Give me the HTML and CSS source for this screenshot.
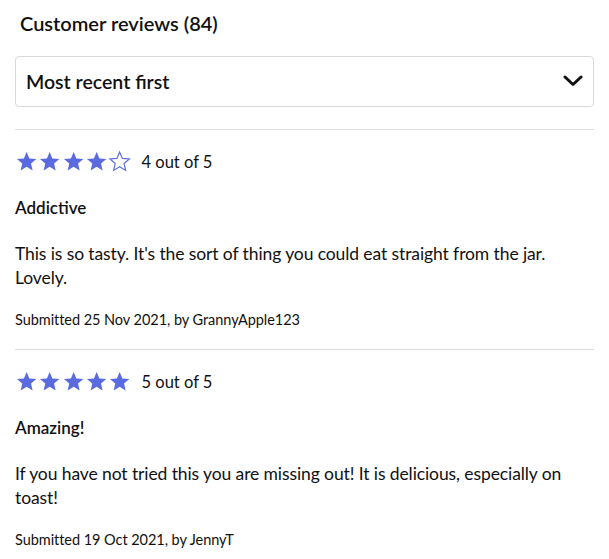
FILE: index.html
```html
<!DOCTYPE html>
<html lang="en">
<head>
<meta charset="utf-8">
<title>Customer reviews</title>
<link rel="stylesheet" href="styles.css">
</head>
<body>
<section class="reviews">
  <h2 class="reviews-title">Customer reviews (84)</h2>
  <div class="sort-select">
    <span class="sort-label">Most recent first</span>
    <svg class="chevron" width="20" height="12" viewBox="0 0 20 12" aria-hidden="true"><path d="M2 2 L10 9.5 L18 2" fill="none" stroke="#111" stroke-width="3" stroke-linecap="round" stroke-linejoin="round"/></svg>
  </div>

  <article class="review">
    <div class="rating">
      <span class="stars">
        <svg class="star" viewBox="0 0 24 24"><path class="fill" d="M12 17.27L18.18 21l-1.64-7.03L22 9.24l-7.19-.61L12 2 9.19 8.63 2 9.24l5.46 4.73L5.82 21z"/></svg>
        <svg class="star" viewBox="0 0 24 24"><path class="fill" d="M12 17.27L18.18 21l-1.64-7.03L22 9.24l-7.19-.61L12 2 9.19 8.63 2 9.24l5.46 4.73L5.82 21z"/></svg>
        <svg class="star" viewBox="0 0 24 24"><path class="fill" d="M12 17.27L18.18 21l-1.64-7.03L22 9.24l-7.19-.61L12 2 9.19 8.63 2 9.24l5.46 4.73L5.82 21z"/></svg>
        <svg class="star" viewBox="0 0 24 24"><path class="fill" d="M12 17.27L18.18 21l-1.64-7.03L22 9.24l-7.19-.61L12 2 9.19 8.63 2 9.24l5.46 4.73L5.82 21z"/></svg>
        <svg class="star" viewBox="0 0 24 24"><path class="empty" d="M12 17.27L18.18 21l-1.64-7.03L22 9.24l-7.19-.61L12 2 9.19 8.63 2 9.24l5.46 4.73L5.82 21z"/></svg>
      </span>
      <span class="rating-text">4 out of 5</span>
    </div>
    <h3 class="review-title">Addictive</h3>
    <p class="review-body">This is so tasty. It's the sort of thing you could eat straight from the jar. Lovely.</p>
    <p class="review-meta">Submitted 25 Nov 2021, by GrannyApple123</p>
  </article>

  <article class="review">
    <div class="rating">
      <span class="stars">
        <svg class="star" viewBox="0 0 24 24"><path class="fill" d="M12 17.27L18.18 21l-1.64-7.03L22 9.24l-7.19-.61L12 2 9.19 8.63 2 9.24l5.46 4.73L5.82 21z"/></svg>
        <svg class="star" viewBox="0 0 24 24"><path class="fill" d="M12 17.27L18.18 21l-1.64-7.03L22 9.24l-7.19-.61L12 2 9.19 8.63 2 9.24l5.46 4.73L5.82 21z"/></svg>
        <svg class="star" viewBox="0 0 24 24"><path class="fill" d="M12 17.27L18.18 21l-1.64-7.03L22 9.24l-7.19-.61L12 2 9.19 8.63 2 9.24l5.46 4.73L5.82 21z"/></svg>
        <svg class="star" viewBox="0 0 24 24"><path class="fill" d="M12 17.27L18.18 21l-1.64-7.03L22 9.24l-7.19-.61L12 2 9.19 8.63 2 9.24l5.46 4.73L5.82 21z"/></svg>
        <svg class="star" viewBox="0 0 24 24"><path class="fill" d="M12 17.27L18.18 21l-1.64-7.03L22 9.24l-7.19-.61L12 2 9.19 8.63 2 9.24l5.46 4.73L5.82 21z"/></svg>
      </span>
      <span class="rating-text">5 out of 5</span>
    </div>
    <h3 class="review-title">Amazing!</h3>
    <p class="review-body">If you have not tried this you are missing out! It is delicious, especially on toast!</p>
    <p class="review-meta">Submitted 19 Oct 2021, by JennyT</p>
  </article>
</section>
</body>
</html>
```

FILE: styles.css
```css
* { box-sizing: border-box; }

html, body {
  margin: 0;
  padding: 0;
  background: #ffffff;
}

body {
  font-family: "Source Sans Pro", "Lato", "Liberation Sans", sans-serif;
  color: #111111;
}

.reviews {
  padding: 9px 15px 0 15px;
}

.reviews-title {
  margin: 0 0 19px 5px;
  font-size: 20px;
  line-height: 28px;
  font-weight: 600;
}

.sort-select {
  height: 51px;
  border: 1px solid #d9d9d9;
  border-radius: 4px;
  display: flex;
  align-items: center;
  justify-content: space-between;
  padding: 0 10px 0 10px;
  margin-bottom: 22px;
}

.sort-label {
  font-size: 19.5px;
  font-weight: 600;
  line-height: 28px;
}

.chevron {
  display: block;
  margin-top: -2px;
}

.review {
  border-top: 1px solid #dcdcdc;
  padding-top: 20px;
  padding-bottom: 19px;
}

.rating {
  display: flex;
  align-items: center;
  height: 24px;
}

.stars {
  display: flex;
}

.star {
  width: 23.3px;
  height: 23.3px;
  display: block;
}

.star .fill {
  fill: #5a6be0;
}

.star .empty {
  fill: none;
  stroke: #5a6be0;
  stroke-width: 1.2;
}

.rating-text {
  margin-left: 10px;
  font-size: 16.5px;
  line-height: 24px;
}

.review-title {
  margin: 22px 0 0 0;
  font-size: 17px;
  line-height: 24px;
  font-weight: 600;
}

.review-body {
  margin: 22px 0 0 0;
  font-size: 17.5px;
  line-height: 24px;
  letter-spacing: -0.1px;
}

.review-meta {
  margin: 20px 0 0 0;
  font-size: 14.5px;
  line-height: 20px;
  letter-spacing: -0.05px;
}
```
